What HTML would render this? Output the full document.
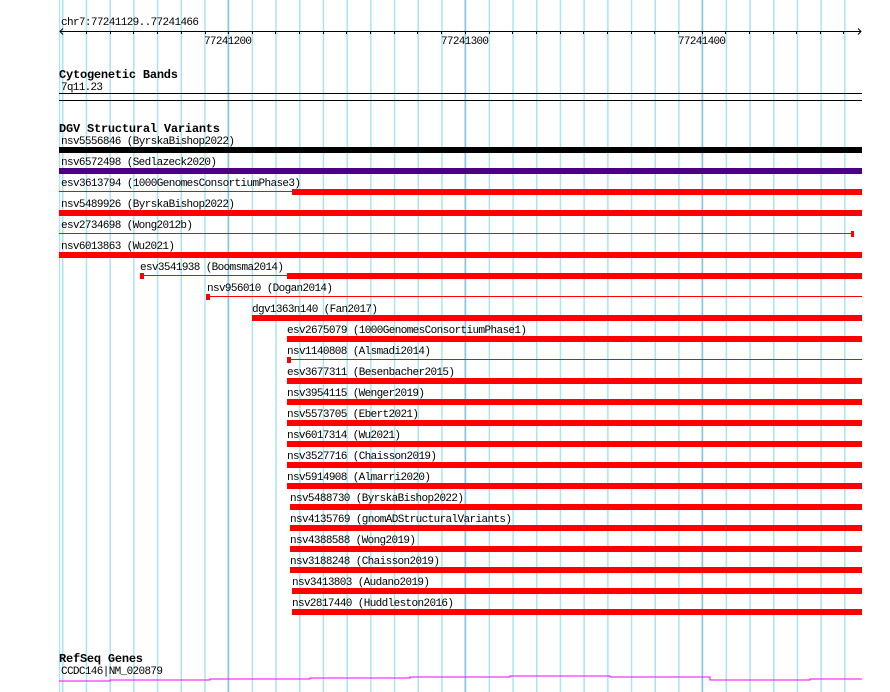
<!DOCTYPE html>
<html><head><meta charset="utf-8"><style>
html,body{margin:0;padding:0;background:#fff;width:890px;height:692px;overflow:hidden}
svg{display:block}
text{font-family:"Liberation Mono",monospace;font-size:11px;fill:#000}
.b{font-weight:bold;font-size:12px}
</style></head><body>
<svg width="890" height="692" viewBox="0 0 890 692" xmlns="http://www.w3.org/2000/svg">
<defs>
<pattern id="g" x="-9.1" y="0" width="23.7" height="692" patternUnits="userSpaceOnUse">
<rect x="0" y="0" width="1.5" height="692" fill="#a6e6ee"/>
</pattern>
</defs>
<rect x="61" y="0" width="785" height="692" fill="url(#g)"/>
<rect x="59" y="0" width="1.2" height="692" fill="#a6e6ee"/>
<rect x="227.5" y="0" width="1.5" height="692" fill="#88c6e6"/>
<rect x="464.5" y="0" width="1.5" height="692" fill="#88c6e6"/>
<rect x="701.5" y="0" width="1.5" height="692" fill="#88c6e6"/>

<!-- ruler -->
<text x="61" y="25" textLength="138">chr7:77241129..77241466</text>
<line x1="60" y1="31.5" x2="861" y2="31.5" stroke="#000" stroke-width="1"/>
<path d="M63 28.5 L60 31.5 L63 34.5 M858 28.5 L861 31.5 L858 34.5" stroke="#000" fill="none" stroke-width="1"/>
<path d="M86.5 31v3 M110.5 31v3 M133.5 31v3 M157.5 31v3 M181.5 31v3 M205.5 31v3 M228.5 31v3 M252.5 31v3 M275.5 31v3 M299.5 31v3 M323.5 31v3 M346.5 31v3 M370.5 31v3 M394.5 31v3 M417.5 31v3 M441.5 31v3 M465.5 31v3 M489.5 31v3 M512.5 31v3 M536.5 31v3 M560.5 31v3 M583.5 31v3 M607.5 31v3 M631.5 31v3 M654.5 31v3 M678.5 31v3 M702.5 31v3 M725.5 31v3 M749.5 31v3 M773.5 31v3 M796.5 31v3 M820.5 31v3 M843.5 31v3" stroke="#000" stroke-width="1"/>
<text x="204" y="44" textLength="48">77241200</text>
<text x="441" y="44" textLength="48">77241300</text>
<text x="678" y="44" textLength="48">77241400</text>

<!-- cyto -->
<text class="b" x="59" y="78" textLength="119">Cytogenetic Bands</text>
<text x="61" y="90" textLength="42">7q11.23</text>
<rect x="59" y="93" width="803" height="1" fill="#000"/>
<rect x="59" y="100" width="803" height="1" fill="#000"/>

<!-- DGV -->
<text class="b" x="59" y="132" textLength="161">DGV Structural Variants</text>

<text x="61" y="144" textLength="174">nsv5556846 (ByrskaBishop2022)</text>
<rect x="59" y="147" width="803" height="6" fill="#000"/>
<text x="61" y="165" textLength="156">nsv6572498 (Sedlazeck2020)</text>
<rect x="59" y="168" width="803" height="6" fill="#4b0082"/>
<text x="61" y="186" textLength="240">esv3613794 (1000GenomesConsortiumPhase3)</text>
<rect x="59" y="191" width="233" height="1" fill="#f00"/>
<rect x="292" y="189" width="570" height="6" fill="#f00"/>
<text x="61" y="207" textLength="174">nsv5489926 (ByrskaBishop2022)</text>
<rect x="59" y="210" width="803" height="6" fill="#f00"/>
<text x="61" y="228" textLength="132">esv2734698 (Wong2012b)</text>
<rect x="59" y="233" width="793" height="1" fill="#f00"/>
<rect x="851" y="231" width="3" height="6" fill="#f00"/>
<text x="61" y="249" textLength="114">nsv6013863 (Wu2021)</text>
<rect x="59" y="252" width="803" height="6" fill="#f00"/>

<text x="140" y="270" textLength="144">esv3541938 (Boomsma2014)</text>
<rect x="140" y="273" width="4" height="6" fill="#f00"/>
<rect x="144" y="275" width="143" height="1" fill="#f00"/>
<rect x="287" y="273" width="575" height="6" fill="#f00"/>
<text x="207" y="291" textLength="126">nsv956010 (Dogan2014)</text>
<rect x="206" y="294" width="4" height="6" fill="#f00"/>
<rect x="210" y="296" width="652" height="1" fill="#f00"/>
<text x="252" y="312" textLength="126">dgv1363n140 (Fan2017)</text>
<rect x="252" y="315" width="610" height="6" fill="#f00"/>
<text x="287" y="333" textLength="240">esv2675079 (1000GenomesConsortiumPhase1)</text>
<rect x="287" y="336" width="575" height="6" fill="#f00"/>
<text x="287" y="354" textLength="144">nsv1140808 (Alsmadi2014)</text>
<rect x="287" y="357" width="4" height="6" fill="#f00"/>
<rect x="291" y="359" width="571" height="1" fill="#f00"/>
<text x="287" y="375" textLength="168">esv3677311 (Besenbacher2015)</text>
<rect x="287" y="378" width="575" height="6" fill="#f00"/>
<text x="287" y="396" textLength="138">nsv3954115 (Wenger2019)</text>
<rect x="287" y="399" width="575" height="6" fill="#f00"/>
<text x="287" y="417" textLength="132">nsv5573705 (Ebert2021)</text>
<rect x="287" y="420" width="575" height="6" fill="#f00"/>
<text x="287" y="438" textLength="114">nsv6017314 (Wu2021)</text>
<rect x="287" y="441" width="575" height="6" fill="#f00"/>
<text x="287" y="459" textLength="150">nsv3527716 (Chaisson2019)</text>
<rect x="287" y="462" width="575" height="6" fill="#f00"/>
<text x="287" y="480" textLength="144">nsv5914908 (Almarri2020)</text>
<rect x="287" y="483" width="575" height="6" fill="#f00"/>
<text x="290" y="501" textLength="174">nsv5488730 (ByrskaBishop2022)</text>
<rect x="290" y="504" width="572" height="6" fill="#f00"/>
<text x="290" y="522" textLength="222">nsv4135769 (gnomADStructuralVariants)</text>
<rect x="290" y="525" width="572" height="6" fill="#f00"/>
<text x="290" y="543" textLength="126">nsv4388588 (Wong2019)</text>
<rect x="290" y="546" width="572" height="6" fill="#f00"/>
<text x="290" y="564" textLength="150">nsv3188248 (Chaisson2019)</text>
<rect x="290" y="567" width="572" height="6" fill="#f00"/>
<text x="292" y="585" textLength="138">nsv3413803 (Audano2019)</text>
<rect x="292" y="588" width="570" height="6" fill="#f00"/>
<text x="292" y="606" textLength="162">nsv2817440 (Huddleston2016)</text>
<rect x="292" y="609" width="570" height="6" fill="#f00"/>

<!-- RefSeq -->
<text class="b" x="59" y="662" textLength="84">RefSeq Genes</text>
<text x="61" y="674" textLength="102">CCDC146|NM_020879</text>
<path d="M59 681H110V680H210V679H310V678H410V677H510V676H610V677H710V680H810V679H862" stroke="#f0f" stroke-width="1" fill="none"/>
</svg>
</body></html>
